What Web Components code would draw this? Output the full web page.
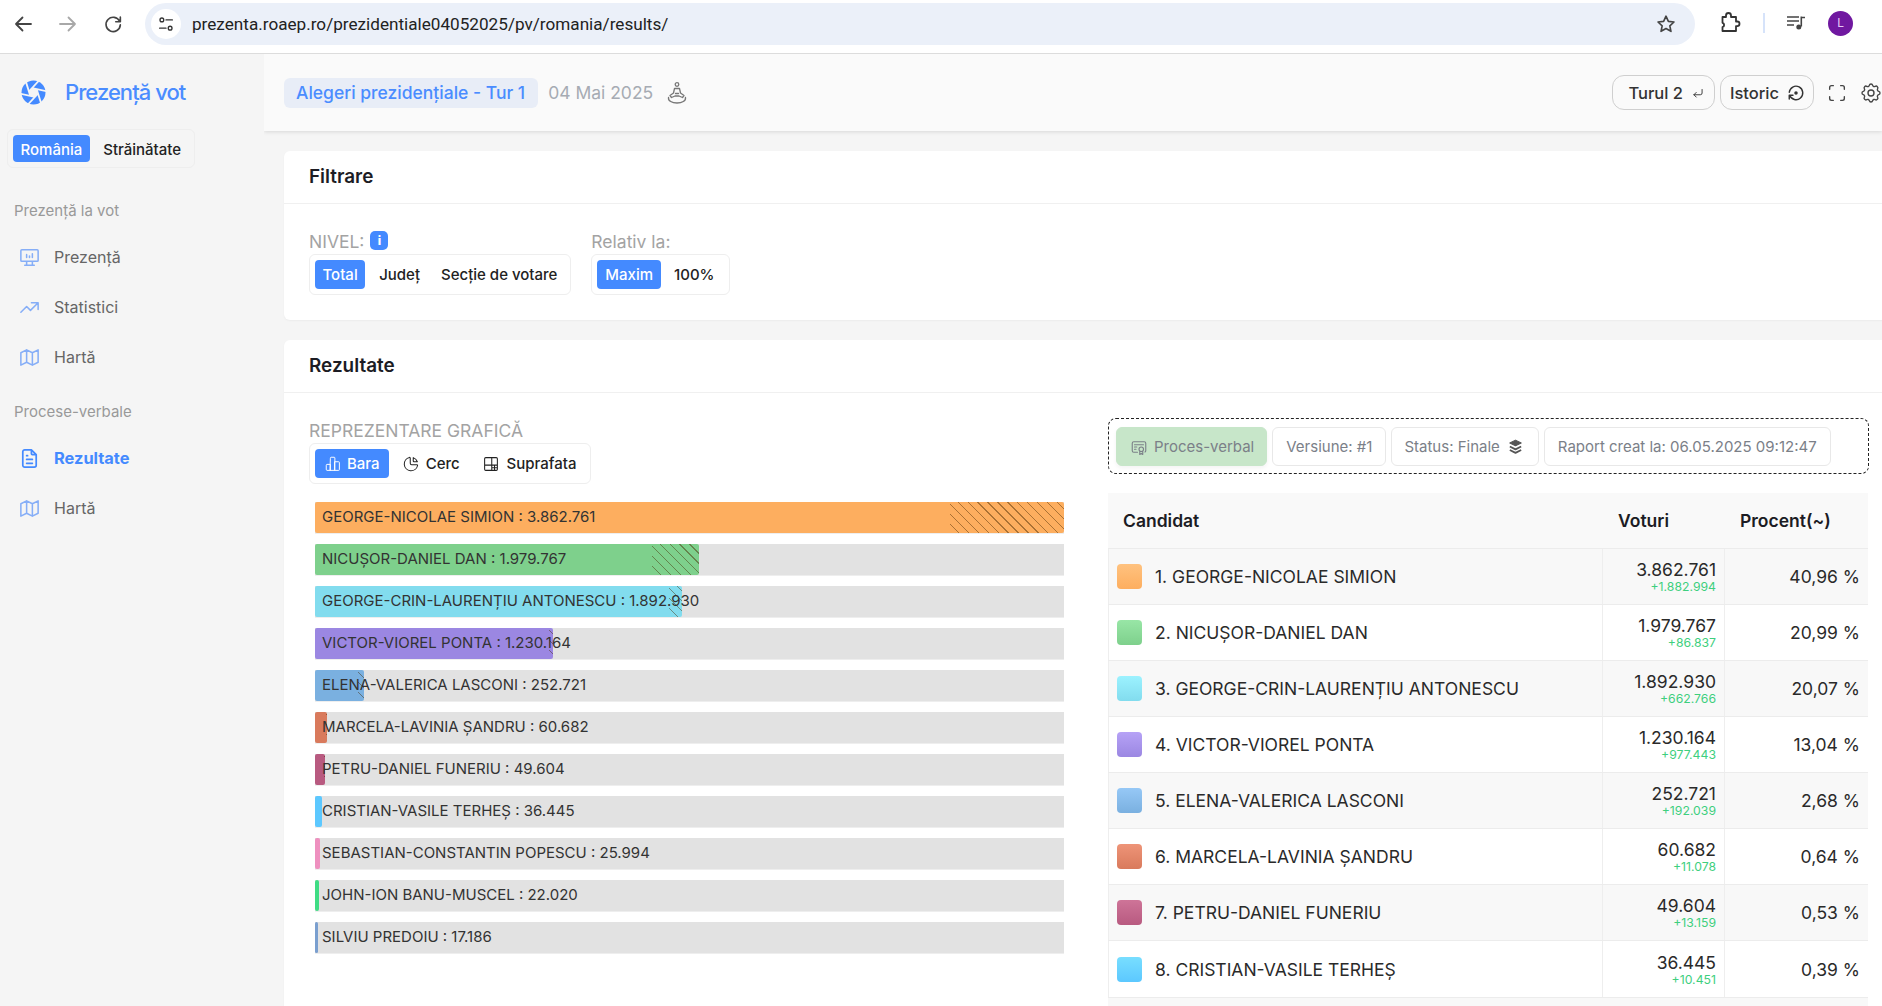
<!doctype html>
<html lang="ro">
<head>
<meta charset="utf-8">
<title>Prezență vot</title>
<style>
  html, body { margin: 0; height: 100%; overflow: hidden; background: #f5f5f5; }
  body { font-family: Inter, "Noto Sans", sans-serif; color: #222; }
</style>
</head>
<body>
<vote-page></vote-page>
<script>
// ICONS ____________________________________________________
const PATHS = {
  desktop: 'M3 5a1 1 0 0 1 1-1h16a1 1 0 0 1 1 1v10a1 1 0 0 1-1 1H4a1 1 0 0 1-1-1z M7 20h10 M9 16v4 M15 16v4 M9 12V9 M12 12v-1.5 M15 12V8',
  trend: 'M3 17l6-6 4 4 8-8 M14 7h7v7',
  map: 'M3 7l6-3 6 3 6-3v13l-6 3-6-3-6 3z M9 4v13 M15 7v13',
  file: 'M14 3v4a1 1 0 0 0 1 1h4 M17 21H7a2 2 0 0 1-2-2V5a2 2 0 0 1 2-2h7l5 5v11a2 2 0 0 1-2 2z M9 9h1 M9 13h6 M9 17h6',
  bars: 'M3 13.5a1 1 0 0 1 1-1h4.500v8H4a1 1 0 0 1-1-1z M8.500 4a1 1 0 0 1 1-1h4a1 1 0 0 1 1 1v16.500h-6z M14.500 9h5a1 1 0 0 1 1 1v9.500a1 1 0 0 1-1 1h-5z',
  pie: 'M10 3.200a9 9 0 1 0 10.800 10.800 1 1 0 0 0-1-1H13a2 2 0 0 1-2-2V4a.9.9 0 0 0-1-.8 M15 3.500A9 9 0 0 1 20.500 9H16a1 1 0 0 1-1-1z',
  treemap: 'M5 3.500h14a1.500 1.500 0 0 1 1.500 1.500v14a1.500 1.500 0 0 1-1.500 1.500H5A1.500 1.500 0 0 1 3.500 19V5A1.500 1.500 0 0 1 5 3.500z M13 3.500v17 M3.500 13.500h17 M13 17h7.500 M16.700 13.500v7',
  cert: 'M12 15a3 3 0 1 0 6 0 3 3 0 1 0-6 0 M13 17.500V22l2-1.500 2 1.500v-4.500 M10 19H5a2 2 0 0 1-2-2V7a2 2 0 0 1 2-2h14a2 2 0 0 1 2 2v10a2 2 0 0 1-1 1.730 M6 9h12 M6 12h3 M6 15h2',
  enter: 'M19 6v6a3 3 0 0 1-3 3H5 M9 11l-4 4 4 4',
  history: 'M3.050 11a9 9 0 1 1 .5 4 M3 20v-5h5',
  full: 'M4 8V6a2 2 0 0 1 2-2h2 M4 16v2a2 2 0 0 0 2 2h2 M16 4h2a2 2 0 0 1 2 2v2 M16 20h2a2 2 0 0 0 2-2v-2',
  gear: 'M10.325 4.317c.426-1.756 2.924-1.756 3.35 0a1.724 1.724 0 0 0 2.573 1.066c1.543-.94 3.31.826 2.37 2.37a1.724 1.724 0 0 0 1.065 2.572c1.756.426 1.756 2.924 0 3.35a1.724 1.724 0 0 0-1.066 2.573c.94 1.543-.826 3.31-2.37 2.37a1.724 1.724 0 0 0-2.572 1.065c-.426 1.756-2.924 1.756-3.35 0a1.724 1.724 0 0 0-2.573-1.066c-1.543.94-3.31-.826-2.37-2.37a1.724 1.724 0 0 0-1.065-2.572c-1.756-.426-1.756-2.924 0-3.35a1.724 1.724 0 0 0 1.066-2.573c-.94-1.543.826-3.31 2.37-2.37 1 .608 2.296.07 2.572-1.065z M9 12a3 3 0 1 0 6 0 3 3 0 1 0-6 0',
  back: 'M20 12H5 M11.500 5.500L5 12l6.500 6.500',
  forward: 'M4 12h15 M12.500 5.500L19 12l-6.500 6.500',
  reload: 'M19.200 9A7.800 7.800 0 1 0 20 13 M20 4.500V9.500h-5',
  star: 'M12 3.500l2.600 5.600 6.100.7-4.500 4.200 1.200 6L12 17l-5.400 3 1.200-6-4.500-4.200 6.100-.7z',
  puzzle: 'M9 4.500a2.500 2.500 0 0 1 5 0V6h5v4.500h1.200a2.300 2.300 0 0 1 0 4.600H19V20H5.500v-3.800a2.300 2.300 0 0 0 0-4.400V6H9z',
  sliders: 'M4 6.500a2.500 2.500 0 1 0 5 0 2.500 2.500 0 1 0-5 0 M12 6.500h8.500 M15 17.500a2.500 2.500 0 1 0 5 0 2.500 2.500 0 1 0-5 0 M3.500 17.500H12'
}
function icon(name, size, color, width = 1.5, fill = 'none') {
  return `<svg width="${size}" height="${size}" viewBox="0 0 24 24" fill="${fill}" stroke="${color}" stroke-width="${width}" stroke-linecap="round" stroke-linejoin="round" style="display:block;flex:none"><path d="${PATHS[name]}"/></svg>`
}
// Shutter logo: a disc cut by six blade lines
function shutter(size) {
  let cuts = '', hex = []
  for (let i = 0; i < 6; i++) {
    const a = (i * 60 + 15) * Math.PI / 180, b = a + 1.75
    const x = (12 + 4.4 * Math.cos(a)).toFixed(2), y = (12 + 4.4 * Math.sin(a)).toFixed(2)
    hex.push(x + ',' + y)
    cuts += `<line x1="${x}" y1="${y}" x2="${(12 + 13 * Math.cos(b)).toFixed(2)}" y2="${(12 + 13 * Math.sin(b)).toFixed(2)}"/>`
  }
  return `<svg width="${size}" height="${size}" viewBox="0 0 24 24" style="display:block;flex:none"><circle cx="12" cy="12" r="11.500" fill="#448aff"/><g stroke="#f5f5f5" stroke-width="1.700">${cuts}</g><polygon points="${hex.join(' ')}" fill="#f5f5f5"/></svg>`
}

// BROWSER BAR ______________________________________________
class BrowserBar extends HTMLElement {
  constructor() {
    super()
    this.attachShadow({mode: 'open'}).innerHTML = `
    <style>
    :host { display: flex; flex: none; height: 53px; background: #fff; border-bottom: 1px solid #dcdcdc; font-family: Roboto, "Liberation Sans", sans-serif; }
    .nav { display: grid; place-items: center; width: 45px; height: 48px; }
    .omni { display: flex; align-items: center; width: 1550px; height: 42px; margin: 3px 0 0 10px; background: #ebf0f9; border-radius: 21px; box-sizing: border-box; padding: 0 18px 0 6px; }
    .tune { display: grid; place-items: center; width: 30px; height: 30px; background: #fff; border-radius: 50%; }
    .url { margin-left: 11px; flex: 1; font-size: 17.150px; color: #222; }
    .tools { display: flex; align-items: center; height: 46px; }
    .sep { width: 2px; height: 20px; background: #d6e3fa; margin: 0 21px 0 22px; }
    .avatar { display: grid; place-items: center; width: 25px; height: 25px; margin-left: 22px; border-radius: 50%; background: #7018a0; color: #e5c8f5; font: 12px Roboto, sans-serif; }
    </style>
    <span class="nav">${icon('back', 24, '#444', 1.8)}</span>
    <span class="nav">${icon('forward', 24, '#a8a8a8', 1.8)}</span>
    <span class="nav">${icon('reload', 22, '#444', 1.8)}</span>
    <div class="omni">
      <span class="tune">${icon('sliders', 18, '#333', 1.8)}</span>
      <span class="url">prezenta.roaep.ro/prezidentiale04052025/pv/romania/results/</span>
      ${icon('star', 22, '#444', 1.8)}
    </div>
    <div class="tools">
      <span style="margin-left:22px">${icon('puzzle', 24, '#333', 1.8)}</span>
      <span class="sep"></span>
      <svg width="20" height="16" viewBox="0 0 20 16" fill="none" stroke="#444" stroke-width="1.600" style="display:block"><path d="M1 2h12 M1 6h12 M1 10h7 M16 2.500h3 M15.300 1.500v10"/><circle cx="12.800" cy="12" r="2.500" fill="#444" stroke="none"/></svg>
      <span class="avatar">L</span>
    </div>`
  }
}
customElements.define('browser-bar', BrowserBar)

// SEGMENTED CONTROL ________________________________________
class SegGroup extends HTMLElement {
  constructor() {
    super()
    this.attachShadow({mode: 'open'}).innerHTML = `
    <style>
    :host { display: inline-flex; align-items: stretch; height: 41px; box-sizing: border-box; padding: 5px; border: 1px solid #eee; border-radius: 6px; }
    </style>
    <slot></slot>`
  }
}
customElements.define('seg-group', SegGroup)

class SegBtn extends HTMLElement {
  constructor() {
    super()
    this.attachShadow({mode: 'open'}).innerHTML = `
    <style>
    :host { display: flex; align-items: center; gap: 6px; padding: 0 8px; border-radius: 4px; font-size: 15px; font-weight: 500; color: #222; white-space: nowrap; }
    :host([active]) { background: #448aff; color: #fff; }
    </style>
    <slot></slot>`
  }
}
customElements.define('seg-btn', SegBtn)

// SIDEBAR __________________________________________________
class NavItem extends HTMLElement {
  connectedCallback() {
    const on = this.hasAttribute('active')
    this.attachShadow({mode: 'open'}).innerHTML = `
    <style>
    :host { display: flex; align-items: center; height: 50px; padding-left: 18px; gap: 13px; font-size: 16px; color: #666; }
    :host([active]) { color: #448aff; font-weight: 700; font-size: 16.400px; }
    </style>
    ${icon(this.getAttribute('icon'), 23, on ? '#448aff' : '#86aef7', on ? 1.8 : 1.6)}
    <slot></slot>`
  }
}
customElements.define('nav-item', NavItem)

class AppSidebar extends HTMLElement {
  constructor() {
    super()
    this.attachShadow({mode: 'open'}).innerHTML = `
    <style>
    :host { display: block; flex: none; width: 264px; background: #f5f5f5; box-sizing: border-box; }
    .brand { display: flex; align-items: center; height: 32px; margin-top: 22px; padding-left: 21px; gap: 19px; font-size: 22px; font-weight: 500; letter-spacing: -.95px; color: #4a8cff; }
    seg-group { margin: 21px 0 0 7px; width: 188px; height: 39px; }
    seg-btn { padding: 1px 7.500px 0; }
    seg-btn + seg-btn { padding-left: 13.500px; }
    .label { height: 20px; line-height: 20px; padding-left: 14px; font-size: 15px; color: #999; }
    .first { margin-top: 33px; }
    .second { margin-top: 20px; }
    nav { margin-top: 11px; }
    </style>
    <div class="brand">${shutter(25)}<span>Prezență vot</span></div>
    <seg-group><seg-btn active>România</seg-btn><seg-btn>Străinătate</seg-btn></seg-group>
    <div class="label first">Prezență la vot</div>
    <nav>
      <nav-item icon="desktop">Prezență</nav-item>
      <nav-item icon="trend">Statistici</nav-item>
      <nav-item icon="map">Hartă</nav-item>
    </nav>
    <div class="label second">Procese-verbale</div>
    <nav>
      <nav-item icon="file" active>Rezultate</nav-item>
      <nav-item icon="map">Hartă</nav-item>
    </nav>`
  }
}
customElements.define('app-sidebar', AppSidebar)

// HEADER ___________________________________________________
class AppHeader extends HTMLElement {
  constructor() {
    super()
    this.attachShadow({mode: 'open'}).innerHTML = `
    <style>
    :host { display: flex; align-items: center; flex: none; position: relative; height: 77px; padding-left: 20px; background: #fafafa; box-shadow: 0 1px 4px rgba(0,0,0,.12); font-size: 17.500px; }
    .chip { display: flex; align-items: center; height: 30px; padding: 0 13px 0 12px; border-radius: 6px; background: #e8edf7; color: #4a8cff; font-weight: 500; }
    .date { margin: 0 12px 0 10px; color: #a6abb3; }
    .right { margin-left: auto; display: flex; align-items: center; font-size: 16.500px; }
    .pill { display: flex; align-items: center; gap: 8px; height: 35px; box-sizing: border-box; padding: 0 9px 0 15px; border: 1px solid #cfcfcf; border-radius: 12px; color: #333; font-weight: 500; }
    .pill + .pill { margin-left: 5px; }
    .pill.two { padding: 0 8px 0 9px; }
    .ico { margin-left: 12px; }
    </style>
    <span class="chip">Alegeri prezidențiale - Tur 1</span>
    <span class="date">04 Mai 2025</span>
    <svg width="24" height="24" viewBox="0 0 24 24" fill="none" stroke="#777" stroke-width="1.300" stroke-linecap="round" stroke-linejoin="round"><circle cx="12" cy="3.500" r="1.800"/><path d="M9.500 7.500h5l1 4.500 3.500 2.500-1.500 2-3.500-1.500h-4l-3.500 1.500-1.500-2 3.500-2.500z M10.500 12.500h3 M3.500 16.500c-.5 3.500 3.500 5.500 8.500 5.500s9-2 8.500-5.500"/></svg>
    <div class="right">
      <span class="pill">Turul 2 ${icon('enter', 14, '#333', 1.600)}</span>
      <span class="pill two">Istoric <svg width="18" height="18" viewBox="0 0 24 24" fill="none" stroke="#333" stroke-width="1.900" stroke-linecap="round" stroke-linejoin="round" style="display:block"><path d="${PATHS.history}"/><circle cx="12" cy="12" r="1.400" fill="#333"/></svg></span>
      <span class="ico">${icon('full', 22, '#444', 1.500)}</span>
      <span class="ico" style="margin-left:11px;margin-right:-1px">${icon('gear', 24, '#444', 1.400)}</span>
    </div>`
  }
}
customElements.define('app-header', AppHeader)

// CARD _____________________________________________________
class PanelCard extends HTMLElement {
  connectedCallback() {
    this.attachShadow({mode: 'open'}).innerHTML = `
    <style>
    :host { display: block; width: 1640px; background: #fff; border-radius: 6px; box-shadow: 0 1px 2px rgba(0,0,0,.04); }
    h2 { margin: 0; height: 52px; line-height: 52px; padding-left: 25px; border-bottom: 1px solid #f0f0f0; font-size: 18.900px; font-weight: 600; color: #1c1c24; }
    </style>
    <h2>${this.getAttribute('heading')}</h2>
    <slot></slot>`
  }
}
customElements.define('panel-card', PanelCard)

class FieldGroup extends HTMLElement {
  connectedCallback() {
    this.attachShadow({mode: 'open'}).innerHTML = `
    <style>
    :host { display: block; }
    .lab { display: flex; align-items: center; gap: 6px; height: 23px; font-size: 17.500px; color: #a3a3a3; padding-bottom: 1px; margin-top: -1px; }
    .info { display: grid; place-items: center; width: 18px; height: 19px; margin-top: -3px; border-radius: 5px; background: #448aff; color: #fff; font-size: 12px; font-weight: 800; }
    </style>
    <div class="lab">${this.getAttribute('label')}${this.hasAttribute('info') ? '<span class="info">i</span>' : ''}</div>
    <slot></slot>`
  }
}
customElements.define('field-group', FieldGroup)

// BARS _____________________________________________________
class ResultBar extends HTMLElement {
  connectedCallback() {
    const fill = this.getAttribute('fill'), hatch = this.getAttribute('hatch') || 0, color = this.getAttribute('color')
    this.attachShadow({mode: 'open'}).innerHTML = `
    <style>
    :host { display: flex; align-items: center; position: relative; height: 31px; padding-left: 7px; background: #e2e2e2; border-bottom: 1px solid #eee; font-size: 15px; color: #333; white-space: nowrap; }
    .fill { position: absolute; left: 0; top: 0; bottom: 0; border-radius: 2px; overflow: hidden; }
    .hatch { position: absolute; right: 0; top: 0; bottom: 0; background: repeating-linear-gradient(45deg, transparent 0 6px, rgba(70,40,0,.45) 6px 7px); }
    span { position: relative; padding-bottom: 2px; }
    </style>
    <div class="fill" style="width:${fill}px;background:${color}"><div class="hatch" style="width:${hatch}px"></div></div>
    <span><slot></slot></span>`
  }
}
customElements.define('result-bar', ResultBar)

// TABLE ____________________________________________________
const ROW_COLUMNS = '495px 122px 143px'
class TableHead extends HTMLElement {
  constructor() {
    super()
    this.attachShadow({mode: 'open'}).innerHTML = `
    <style>
    :host { display: grid; grid-template-columns: ${ROW_COLUMNS}; height: 55px; align-items: center; background: #f9f9f9; border-bottom: 1px solid #ececec; font-size: 17.500px; font-weight: 600; color: #1c1c24; }
    span { padding: 0 0 1px 15px; }
    </style>
    <span>Candidat</span><span>Voturi</span><span>Procent(~)</span>`
  }
}
customElements.define('table-head', TableHead)

class ResultRow extends HTMLElement {
  connectedCallback() {
    const a = n => this.getAttribute(n)
    this.attachShadow({mode: 'open'}).innerHTML = `
    <style>
    :host { display: grid; grid-template-columns: ${ROW_COLUMNS}; height: 55px; background: #fff; border-bottom: 1px solid #ececec; font-size: 17.500px; color: #2a2a2a; }
    :host([odd]) { background: #f8f8f8; }
    :host([tall]) { height: 56px; }
    .cell { display: flex; align-items: center; box-sizing: border-box; border-right: 1px solid #eee; }
    .name { padding-left: 8px; gap: 13px; border-left: 1px solid #eee; }
    .swatch { flex: none; width: 25px; height: 25px; border-radius: 4px; background: linear-gradient(${a('light')}, ${a('color')}); }
    .votes { flex-direction: column; justify-content: center; align-items: flex-end; padding-right: 8px; line-height: 21px; }
    .votes small { font-size: 12.250px; line-height: 14px; color: #3ecf7e; }
    .pct { justify-content: flex-end; padding-right: 8px; border-right: 0; }
    </style>
    <div class="cell name"><span class="swatch"></span><span>${a('name')}</span></div>
    <div class="cell votes"><span>${a('votes')}</span><small>${a('delta')}</small></div>
    <div class="cell pct">${a('pct')}</div>`
  }
}
customElements.define('result-row', ResultRow)

// PAGE _____________________________________________________
const CANDIDATES = [
  ['GEORGE-NICOLAE SIMION', '3.862.761', '+1.882.994', '40,96 %', 749, 114, '#fdae5f', '#ffc27f'],
  ['NICUȘOR-DANIEL DAN', '1.979.767', '+86.837', '20,99 %', 384, 47, '#7ed08c', '#98e6a6'],
  ['GEORGE-CRIN-LAURENȚIU ANTONESCU', '1.892.930', '+662.766', '20,07 %', 367, 13, '#82dcee', '#9cf2ff'],
  ['VICTOR-VIOREL PONTA', '1.230.164', '+977.443', '13,04 %', 238, 4, '#9b87e2', '#b6a2f6'],
  ['ELENA-VALERICA LASCONI', '252.721', '+192.039', '2,68 %', 49, 6, '#7ab0e0', '#96c8f6'],
  ['MARCELA-LAVINIA ȘANDRU', '60.682', '+11.078', '0,64 %', 12, 1, '#d97a5c', '#ee9478'],
  ['PETRU-DANIEL FUNERIU', '49.604', '+13.159', '0,53 %', 10, 1, '#b85a80', '#ce7498'],
  ['CRISTIAN-VASILE TERHEȘ', '36.445', '+10.451', '0,39 %', 7, 0, '#5cc8ff', '#78deff']
]
const EXTRA_BARS = [
  ['SEBASTIAN-CONSTANTIN POPESCU', '25.994', 5, '#ee90bf'],
  ['JOHN-ION BANU-MUSCEL', '22.020', 4, '#3fdc84'],
  ['SILVIU PREDOIU', '17.186', 3, '#7a9fcf']
]

class VotePage extends HTMLElement {
  constructor() {
    super()
    const bars = CANDIDATES.map(c => `<result-bar fill="${c[4]}" hatch="${c[5]}" color="${c[6]}">${c[0]} : ${c[1]}</result-bar>`).join('')
      + EXTRA_BARS.map(c => `<result-bar fill="${c[2]}" color="${c[3]}">${c[0]} : ${c[1]}</result-bar>`).join('')
    const rows = CANDIDATES.map((c, i) => `<result-row ${i % 2 ? '' : 'odd'} ${i === 7 ? 'tall' : ''} name="${i + 1}. ${c[0]}" votes="${c[1]}" delta="${c[2]}" pct="${c[3]}" color="${c[6]}" light="${c[7]}"></result-row>`).join('')
    this.attachShadow({mode: 'open'}).innerHTML = `
    <style>
    :host { display: flex; flex-direction: column; width: 1882px; height: 1006px; overflow: hidden; }
    .app { display: flex; flex: 1; min-height: 0; }
    main { flex: 1; min-width: 0; overflow: hidden; display: flex; flex-direction: column; }
    .content { display: flex; flex-direction: column; gap: 20px; padding: 20px 0 0 20px; }
    .filters { display: flex; gap: 20px; padding: 27px 25px 25px; height: 64px; }
    .results { display: flex; gap: 44px; padding: 25px 25px 0; height: 640px; }
    .chart { width: 755px; flex: none; padding-top: 2px; }
    .bars { display: flex; flex-direction: column; gap: 10px; margin: 18px 0 0 6px; width: 749px; }
    .side { width: 761px; flex: none; }
    .report { display: flex; gap: 5px; height: 56px; box-sizing: border-box; padding: 8px 7px; border: 1px dashed #222; border-radius: 8px; }
    .tag { display: flex; align-items: center; gap: 6px; height: 39px; box-sizing: border-box; padding: 0 13px; border: 1px solid #e8e8e8; border-radius: 6px; font-size: 15px; color: #7b8088; white-space: nowrap; }
    .tag.ok { background: #c7e6c9; border-color: #c7e6c9; box-shadow: 0 2px 4px rgba(0,0,0,.05); padding: 0 12px 0 13px; }
    .tag.st { padding: 0 14px 0 12px; gap: 7px; }
    .grid { margin-top: 19px; width: 760px; }
    .pad-row { height: 10px; background: #f8f8f8; }
    </style>
    <browser-bar></browser-bar>
    <div class="app">
      <app-sidebar></app-sidebar>
      <main>
        <app-header></app-header>
        <div class="content">
          <panel-card heading="Filtrare">
            <div class="filters">
              <field-group label="NIVEL:" info>
                <seg-group><seg-btn active style="padding:0 7.500px">Total</seg-btn><seg-btn style="padding:0 10px 0 14px">Județ</seg-btn><seg-btn style="padding:0 8px 0 11px">Secție de votare</seg-btn></seg-group>
              </field-group>
              <field-group label="Relativ la:">
                <seg-group><seg-btn active>Maxim</seg-btn><seg-btn style="padding:0 9px 0 13px">100%</seg-btn></seg-group>
              </field-group>
            </div>
          </panel-card>
          <panel-card heading="Rezultate">
            <div class="results">
              <div class="chart">
                <field-group label="REPREZENTARE GRAFICĂ">
                  <seg-group>
                    <seg-btn active style="padding:0 9px;gap:5px">${icon('bars', 18, '#fff', 1.300)}Bara</seg-btn>
                    <seg-btn style="padding:0 10px 0 13px">${icon('pie', 18, '#222', 1.400)}Cerc</seg-btn>
                    <seg-btn style="padding:0 8px 0 12px;gap:7px">${icon('treemap', 18, '#222', 1.400)}Suprafata</seg-btn>
                  </seg-group>
                </field-group>
                <div class="bars">${bars}</div>
              </div>
              <div class="side">
                <div class="report">
                  <span class="tag ok">${icon('cert', 18, '#7b8088', 1.500)}Proces-verbal</span>
                  <span class="tag">Versiune: #1</span>
                  <span class="tag st">Status: Finale <svg width="17" height="17" viewBox="0 0 24 24" fill="#555" stroke="#555" stroke-width="1.500" stroke-linejoin="round" style="display:block"><path d="M12 3l8 4-8 4-8-4z"/><path d="M4 12l8 4 8-4" fill="none" stroke-width="2.600"/><path d="M4 17l8 4 8-4" fill="none" stroke-width="2.600"/></svg></span>
                  <span class="tag">Raport creat la: 06.05.2025 09:12:47</span>
                </div>
                <div class="grid">
                  <table-head></table-head>
                  ${rows}
                  <div class="pad-row"></div>
                </div>
              </div>
            </div>
          </panel-card>
        </div>
      </main>
    </div>`
  }
}
customElements.define('vote-page', VotePage)
</script>
</body>
</html>
